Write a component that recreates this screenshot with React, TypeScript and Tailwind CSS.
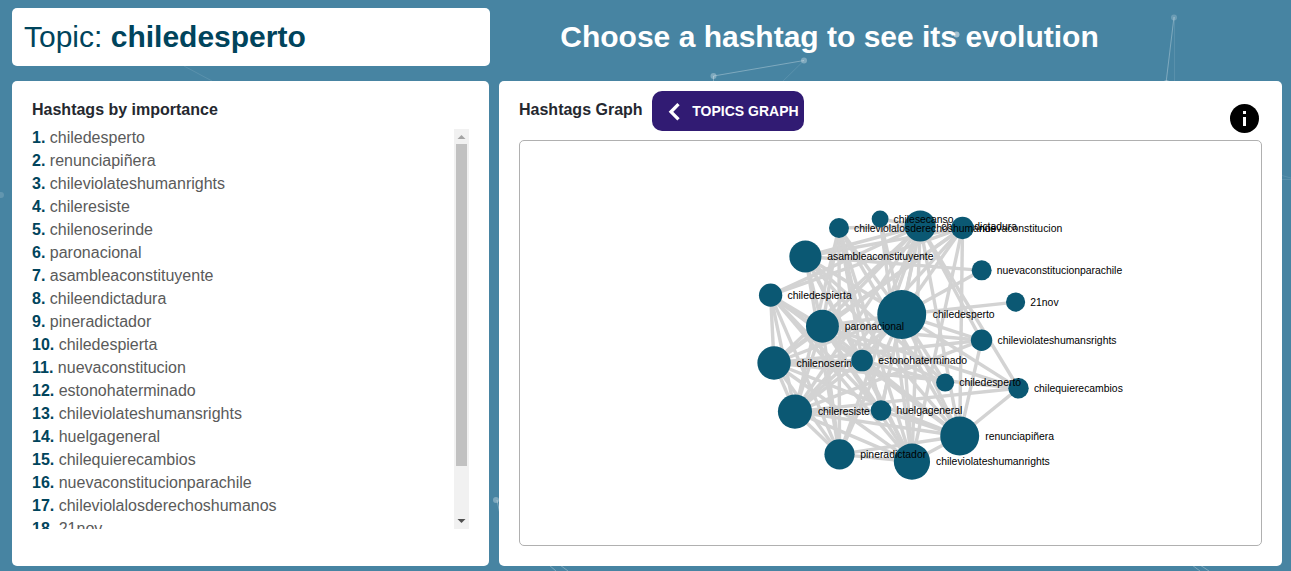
type HashtagNode = { name: string; x: number; y: number; r: number };

const nodes: HashtagNode[] = [
  { name: 'chiledesperto', x: 366.8, y: 166.6, r: 23.5 },
  { name: 'renunciapiñera', x: 422.5, y: 283.4, r: 18.7 },
  { name: 'chileviolateshumanrights', x: 376.6, y: 308, r: 17.4 },
  { name: 'chileresiste', x: 264.2, y: 259.9, r: 16.4 },
  { name: 'chilenoserinde', x: 244.1, y: 213.2, r: 16 },
  { name: 'paronacional', x: 290.6, y: 177.9, r: 15.8 },
  { name: 'asambleaconstituyente', x: 274.2, y: 110.9, r: 15.4 },
  { name: 'chileendictadura', x: 384.5, y: 81.6, r: 14.9 },
  { name: 'pineradictador', x: 307, y: 301, r: 14.5 },
  { name: 'chiledespierta', x: 240.8, y: 148, r: 11.2 },
  { name: 'nuevaconstitucion', x: 425.2, y: 83.4, r: 10.8 },
  { name: 'estonohaterminado', x: 328.7, y: 210.8, r: 10.4 },
  { name: 'chileviolateshumansrights', x: 443.5, y: 191.4, r: 10.3 },
  { name: 'huelgageneral', x: 346.9, y: 258.9, r: 9.9 },
  { name: 'chilequierecambios', x: 479, y: 237.5, r: 9.8 },
  { name: 'nuevaconstitucionparachile', x: 443.6, y: 124.2, r: 9.6 },
  { name: 'chileviolalosderechoshumanos', x: 306.5, y: 83.5, r: 9.6 },
  { name: '21nov', x: 476.2, y: 154.7, r: 9.2 },
  { name: 'chiledespertó', x: 408.5, y: 232, r: 8.7 },
  { name: 'chilesecanso', x: 346, y: 74.9, r: 8.1 },
];

/* For every node, the positions of the more important hashtags it appears with. */
const links: number[][] = [
  [],
  [0],
  [0, 1],
  [0, 1, 2],
  [0, 1, 2, 3],
  [0, 1, 2, 3, 4],
  [0, 1, 2, 5],
  [0, 1, 2, 3, 4, 5, 6],
  [0, 1, 2, 3, 4, 5, 6, 7],
  [1, 2, 3, 4, 5, 7, 8],
  [0, 1, 2, 3, 4, 5, 6, 9],
  [0, 1, 2, 3, 4, 6, 7, 9],
  [0, 1, 3, 4, 5, 7],
  [0, 1, 3, 5, 7, 9],
  [0, 1, 3, 4, 5, 7],
  [0, 6],
  [0, 1, 2, 3, 5, 7, 8, 11, 13],
  [0],
  [0, 5, 6, 11],
  [0, 2, 7],
];

function HashtagGraph() {
  return (
    <svg viewBox="0 0 712 388" className="h-[404px] w-full" role="img" aria-label="Hashtags graph">
      <g stroke="#d3d3d3" strokeWidth="3.3">
        {links.flatMap((targets, i) =>
          targets.map((t) => (
            <line key={`${i}-${t}`} x1={nodes[i].x} y1={nodes[i].y} x2={nodes[t].x} y2={nodes[t].y} />
          )),
        )}
      </g>
      {nodes.map((n) => (
        <g key={n.name}>
          <circle cx={n.x} cy={n.y} r={n.r} fill="#0b5873" />
          <text x={n.x + n.r * 1.1 + 4} y={n.y + 3.5} className="fill-black text-[10px]">
            {n.name}
          </text>
        </g>
      ))}
    </svg>
  );
}

function Network() {
  return (
    <svg className="absolute inset-0 h-full w-full" aria-hidden="true">
      <g stroke="#ffffff" fill="none">
        <path
          d="M713.5 76 804 60.5M713.5 76v10M1174 17l-8 66M497 500l5 24M1192 565l8 6M1200 565l9 6M549 565l7 6M560 565l8 6"
          strokeOpacity="0.3"
        />
        <path d="M804 60.5 780 84M1174.5 17v66M184 66l28 15M1280 175l11 3M1280 179.5h11" strokeOpacity="0.1" />
      </g>
      <g fill="#ffffff" fillOpacity="0.3">
        <circle cx="713.5" cy="76" r="3" />
        <circle cx="804" cy="60.5" r="3" />
        <circle cx="956.5" cy="34.5" r="3" fillOpacity="0.5" />
        <circle cx="1174" cy="17.5" r="3" fillOpacity="0.2" />
        <circle cx="1166.5" cy="83" r="3" />
        <circle cx="496" cy="500" r="3" />
        <circle cx="1" cy="195" r="3" fillOpacity="0.15" />
      </g>
    </svg>
  );
}

function HashtagList() {
  return (
    <div className="flex h-[400px]">
      <ol className="flex-1 overflow-y-auto text-base leading-[23px] text-[#5a5a5a] [scrollbar-width:none]">
        {nodes.map((n, i) => (
          <li key={n.name} className="-mt-[3px] mb-[3px]">
            <a href={`#${n.name}`}>
              <b className="text-[#00445c]">{i + 1}.</b> {n.name}
            </a>
          </li>
        ))}
      </ol>
      <div className="flex w-[15px] flex-col items-center bg-[#f1f1f1]" aria-hidden="true">
        <svg viewBox="0 0 15 15" className="size-[15px]">
          <path d="M3.5 10h8l-4-4z" fill="#a3a3a3" />
        </svg>
        <div className="h-[322px] w-[11px] bg-[#c1c1c1]" />
        <svg viewBox="0 0 15 15" className="mt-auto size-[15px]">
          <path d="M3.5 5h8l-4 4z" fill="#505050" />
        </svg>
      </div>
    </div>
  );
}

export default function App() {
  return (
    <div className="relative min-h-screen overflow-hidden bg-[#4784a2] font-['Liberation_Sans',Arial,sans-serif] text-[#25282f]">
      <Network />
      <main className="relative pt-2 pr-[9px] pb-[5px] pl-3">
        <header className="flex h-[58px] items-stretch leading-[58px]">
          <h1 className="w-[478px] shrink-0 rounded-[5px] bg-white px-3 text-[30px] text-[#00445c]">
            Topic: <b>chiledesperto</b>
          </h1>
          <h2 className="flex-1 pr-[113px] text-center text-[30px] font-bold text-white">
            Choose a hashtag to see its evolution
          </h2>
        </header>
        <div className="mt-[15px] flex gap-[10px]">
          <section className="w-[477px] shrink-0 rounded-[5px] bg-white px-5 pt-[19px]">
            <h3 className="mb-[9px] text-base leading-5 font-bold">Hashtags by importance</h3>
            <HashtagList />
          </section>
          <section className="flex-1 rounded-[5px] bg-white px-5 pt-[10px] pb-5">
            <div className="flex h-[49px] items-start">
              <h3 className="mt-[9px] text-base leading-5 font-bold">Hashtags Graph</h3>
              <button
                type="button"
                className="ml-[9px] flex h-10 w-[152px] items-center justify-between rounded-[10px] bg-[#311b73] px-[5px] text-sm font-bold text-white"
              >
                <svg viewBox="0 0 35 35" className="size-[35px]" aria-hidden="true">
                  <path d="M21.500 10.200 14 17.800l7.500 7.600" fill="none" stroke="currentColor" strokeWidth="3.300" />
                </svg>
                TOPICS GRAPH
              </button>
              <button type="button" aria-label="Information" className="mt-[13px] mr-[3px] ml-auto">
                <svg viewBox="0 0 29 29" className="size-[29px]">
                  <circle cx="14.5" cy="14.5" r="14.5" />
                  <path d="M13 7h3v3h-3zM13 13h3v9h-3z" fill="#ffffff" />
                </svg>
              </button>
            </div>
            <div className="rounded-[5px] border border-[#b0b0b0]">
              <HashtagGraph />
            </div>
          </section>
        </div>
      </main>
    </div>
  );
}
